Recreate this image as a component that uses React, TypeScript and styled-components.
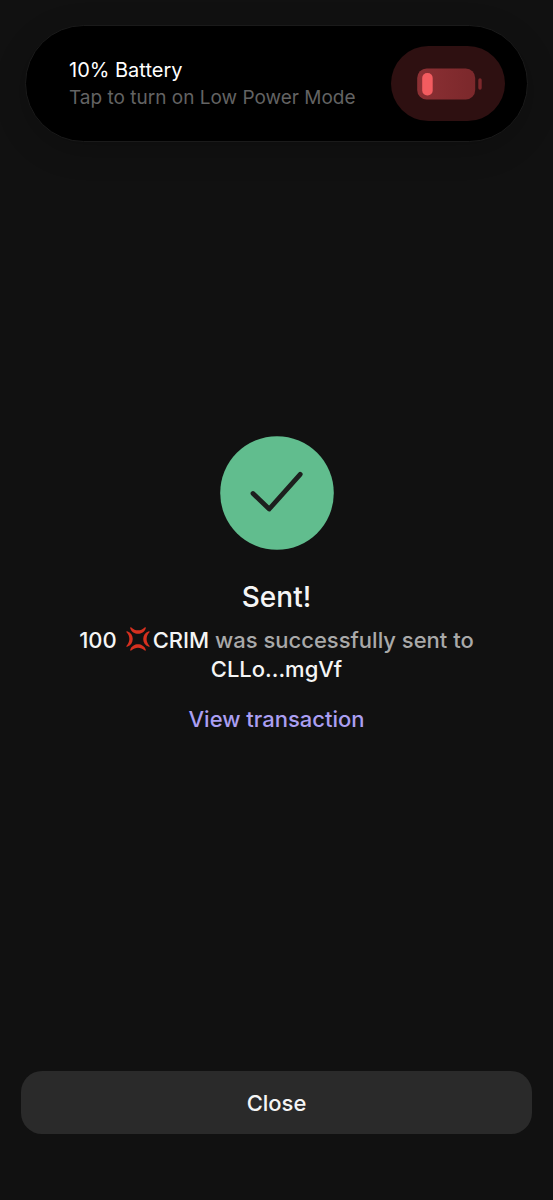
import React from "react";
import styled, { createGlobalStyle } from "styled-components";

const GlobalStyle = createGlobalStyle`
  *, *::before, *::after { box-sizing: border-box; }
  body {
    margin: 0;
    background: #111111;
    color: #f5f5f5;
    font-family: Inter, "Liberation Sans", sans-serif;
  }
`;

const Screen = styled.div`
  display: flex;
  flex-direction: column;
  min-height: 100vh;
`;

const Banner = styled.button`
  display: flex;
  align-items: center;
  justify-content: space-between;
  margin: 25px 25px 0;
  padding: 20px 22px 20px 43px;
  border: 1px solid #1a1a1a;
  border-radius: 59px;
  background: #000000;
  box-shadow: 0 8px 32px rgba(0, 0, 0, 0.2);
  font-family: inherit;
  text-align: left;
  cursor: pointer;
`;

const BannerText = styled.span`
  display: flex;
  flex-direction: column;
`;

const BannerLine = styled.span<{ $muted?: boolean }>`
  font-size: ${({ $muted }) => ($muted ? 19 : 20)}px;
  line-height: 28px;
  color: ${({ $muted }) => ($muted ? "#636363" : "#ffffff")};
`;

const BatteryPill = styled.span`
  display: flex;
  align-items: center;
  justify-content: center;
  flex: none;
  width: 114px;
  height: 75px;
  border-radius: 38px;
  background: #2e1011;
`;

const Result = styled.main`
  display: flex;
  flex: 1;
  flex-direction: column;
  align-items: center;
  justify-content: center;
  padding: 0 40px 44px;
  text-align: center;
`;

const Title = styled.h1`
  margin: 30px 0 0;
  font-size: 28px;
  font-weight: 500;
  line-height: 34px;
`;

const Summary = styled.p`
  max-width: 420px;
  margin: 12px 0 0;
  font-size: 22px;
  font-weight: 500;
  line-height: 29px;
  color: #a9a9a9;
`;

const Strong = styled.span`
  color: #f5f5f5;
`;

const TokenIcon = styled.svg`
  width: 24px;
  height: 24px;
  margin: 0 3px;
  vertical-align: -3px;
`;

const TransactionLink = styled.a`
  margin-top: 21px;
  font-size: 22px;
  font-weight: 500;
  line-height: 28px;
  color: #ab9ff2;
  text-decoration: none;
`;

const Footer = styled.footer`
  display: flex;
  padding: 0 21px 66px;
`;

const CloseButton = styled.button`
  flex: 1;
  height: 63px;
  border: 0;
  border-radius: 21px;
  background: #2a2a2a;
  color: #f5f5f5;
  font-family: inherit;
  font-size: 22px;
  font-weight: 500;
  line-height: 28px;
  cursor: pointer;
`;

function BatteryIcon() {
  return (
    <svg width="68" height="32" viewBox="0 0 68 32" aria-hidden="true">
      <defs>
        <linearGradient id="shell" x1="0" x2="1">
          <stop offset="0" stopColor="#8c3034" />
          <stop offset="1" stopColor="#7b282b" />
        </linearGradient>
      </defs>
      <rect x="3.2" y="0.5" width="58" height="31" rx="9.5" fill="url(#shell)" />
      <rect x="8.2" y="5" width="10.5" height="22.5" rx="5" fill="#f35c60" />
      <rect x="64.3" y="10.3" width="3.4" height="11.4" rx="1.7" fill="#7b282b" />
    </svg>
  );
}

function SuccessIcon() {
  return (
    <svg width="114" height="114" viewBox="0 0 114 114" aria-hidden="true">
      <circle cx="57" cy="57" r="56.8" fill="#61bd8e" />
      <path
        d="M33 57.5L49.2 73L80.2 38.3"
        fill="none"
        stroke="#1d1f1e"
        strokeWidth="4.8"
        strokeLinecap="round"
        strokeLinejoin="round"
      />
    </svg>
  );
}

function AngerIcon() {
  return (
    <TokenIcon viewBox="0 0 24 24" role="img" aria-label="anger symbol">
      <g fill="#d5301f">
        <path id="arc" d="M4.2 1.2C3.9 .2 5 0 5.6 .8C9 4.2 15 4.2 18.4 .8C19 0 20.1 .2 19.8 1.2C17.5 8.6 6.5 8.6 4.2 1.2Z" />
        <use href="#arc" transform="rotate(90 12 12)" />
        <use href="#arc" transform="rotate(180 12 12)" />
        <use href="#arc" transform="rotate(270 12 12)" />
      </g>
    </TokenIcon>
  );
}

export default function App() {
  return (
    <Screen>
      <GlobalStyle />
      <Banner type="button">
        <BannerText>
          <BannerLine>10% Battery</BannerLine>
          <BannerLine $muted>Tap to turn on Low Power Mode</BannerLine>
        </BannerText>
        <BatteryPill>
          <BatteryIcon />
        </BatteryPill>
      </Banner>
      <Result>
        <SuccessIcon />
        <Title>Sent!</Title>
        <Summary>
          <Strong>
            100 <AngerIcon />
            CRIM
          </Strong>{" "}
          was successfully sent to <Strong>CLLo...mgVf</Strong>
        </Summary>
        <TransactionLink href="#transaction">View transaction</TransactionLink>
      </Result>
      <Footer>
        <CloseButton type="button">Close</CloseButton>
      </Footer>
    </Screen>
  );
}
